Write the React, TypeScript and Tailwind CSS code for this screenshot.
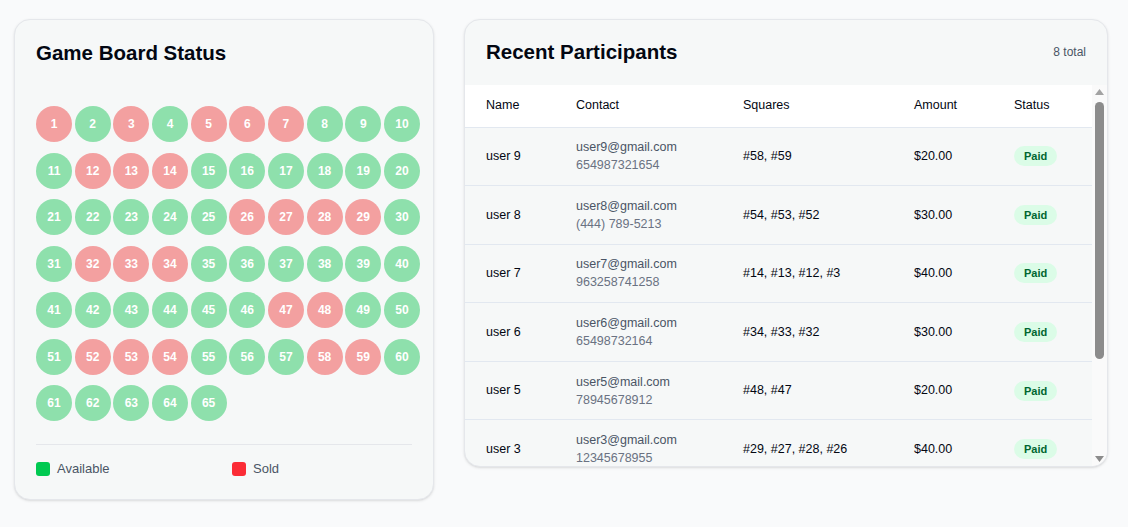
import React from "react";

const sold = new Set([1, 3, 5, 6, 7, 12, 13, 14, 26, 27, 28, 29, 32, 33, 34, 47, 48, 52, 53, 54, 58, 59]);

const participants = [
  { name: "user 9", email: "user9@gmail.com", phone: "654987321654", squares: "#58, #59", amount: "$20.00" },
  { name: "user 8", email: "user8@gmail.com", phone: "(444) 789-5213", squares: "#54, #53, #52", amount: "$30.00" },
  { name: "user 7", email: "user7@gmail.com", phone: "963258741258", squares: "#14, #13, #12, #3", amount: "$40.00" },
  { name: "user 6", email: "user6@gmail.com", phone: "65498732164", squares: "#34, #33, #32", amount: "$30.00" },
  { name: "user 5", email: "user5@mail.com", phone: "78945678912", squares: "#48, #47", amount: "$20.00" },
  { name: "user 3", email: "user3@gmail.com", phone: "12345678955", squares: "#29, #27, #28, #26", amount: "$40.00" },
  { name: "user 2", email: "user2@gmail.com", phone: "32165498745", squares: "#7, #6, #5", amount: "$30.00" },
  { name: "user 1", email: "user1@gmail.com", phone: "98765432100", squares: "#1", amount: "$10.00" },
];

function BoardCard() {
  const squares = Array.from({ length: 65 }, (_, i) => i + 1);
  return (
    <div className="w-[420px] rounded-2xl border border-gray-200 bg-[#f6f8f8] px-[21px] pt-[19px] pb-[20px] shadow-sm">
      <h2 className="text-[20.5px] font-bold leading-7 text-gray-950">Game Board Status</h2>
      <div className="mt-[39px] grid w-[384px] grid-cols-10 gap-x-[2.6px] gap-y-[10.5px]">
        {squares.map((n) => (
          <div
            key={n}
            className={
              "flex h-9 w-9 items-center justify-center rounded-full text-xs font-bold text-white " +
              (sold.has(n) ? "bg-[#f3a0a0]" : "bg-[#8ee0ac]")
            }
          >
            {n}
          </div>
        ))}
      </div>
      <div className="mt-[23px] border-t border-gray-200 pt-[14px]">
        <div className="grid grid-cols-2 gap-4 text-[13px] leading-5 text-gray-600">
          <div className="flex items-center gap-[7px]">
            <span className="h-[14px] w-[14px] rounded-[3px] bg-green-500" />
            Available
          </div>
          <div className="flex items-center gap-[7px]">
            <span className="h-[14px] w-[14px] rounded-[3px] bg-red-500" />
            Sold
          </div>
        </div>
      </div>
    </div>
  );
}

function ScrollBar() {
  return (
    <div className="flex w-[15px] shrink-0 flex-col items-center bg-[#fafafa]">
      <svg width="9" height="6" viewBox="0 0 9 6" className="mt-[4px]">
        <polygon points="4.5,0 9,6 0,6" fill="#a3a3a3" />
      </svg>
      <div className="mt-[7px] h-[257px] w-[9px] rounded-full bg-[#8c8c8c]" />
      <div className="flex-1" />
      <svg width="9" height="6" viewBox="0 0 9 6" className="mb-[4px]">
        <polygon points="0,0 9,0 4.5,6" fill="#8c8c8c" />
      </svg>
    </div>
  );
}

function ParticipantsCard() {
  return (
    <div className="flex h-[448px] w-[644px] flex-col overflow-hidden rounded-2xl border border-gray-200 bg-[#f6f8f8] shadow-sm">
      <div className="flex items-center justify-between px-[21px] pt-[18px] pb-[19px]">
        <h2 className="text-[20.5px] font-bold leading-7 text-gray-950">Recent Participants</h2>
        <span className="text-xs text-gray-600">8 total</span>
      </div>
      <div className="flex min-h-0 flex-1">
        <div className="min-w-0 flex-1 overflow-y-auto">
          <table className="w-full table-fixed border-collapse text-left text-[12.5px] text-gray-950">
            <colgroup>
              <col className="w-[111px]" />
              <col className="w-[167px]" />
              <col className="w-[171px]" />
              <col className="w-[100px]" />
              <col />
            </colgroup>
            <thead className="bg-white">
              <tr className="h-[42px] border-b border-slate-200">
                <th className="pl-[21px] font-normal">Name</th>
                <th className="font-normal">Contact</th>
                <th className="font-normal">Squares</th>
                <th className="font-normal">Amount</th>
                <th className="font-normal">Status</th>
              </tr>
            </thead>
            <tbody>
              {participants.map((p) => (
                <tr key={p.name} className="h-[58.6px] border-b border-slate-200">
                  <td className="pl-[21px]">{p.name}</td>
                  <td className="leading-[18px]">
                    <div className="text-gray-600">{p.email}</div>
                    <div className="text-gray-500">{p.phone}</div>
                  </td>
                  <td>{p.squares}</td>
                  <td>{p.amount}</td>
                  <td>
                    <span className="inline-block rounded-full bg-green-100 px-2.5 py-0.5 text-[11px] leading-4 font-bold text-green-800">
                      Paid
                    </span>
                  </td>
                </tr>
              ))}
            </tbody>
          </table>
        </div>
        <ScrollBar />
      </div>
    </div>
  );
}

export default function App() {
  return (
    <div
      className="min-h-[527px] bg-gray-50"
      style={{ fontFamily: '"Liberation Sans", Arial, sans-serif' }}
    >
      <div className="flex items-start gap-[30px] pl-[14px] pt-[19px]">
        <BoardCard />
        <ParticipantsCard />
      </div>
    </div>
  );
}
